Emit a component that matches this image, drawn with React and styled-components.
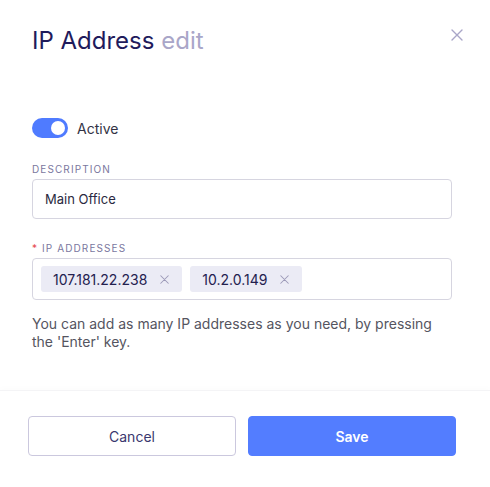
import styled, { createGlobalStyle } from "styled-components";
import { useState } from "react";

const GlobalStyle = createGlobalStyle`
  html, body {
    margin: 0;
    padding: 0;
    background: #ffffff;
  }
  body {
    font-family: Inter, "Noto Sans", sans-serif;
    -webkit-font-smoothing: antialiased;
  }
  * { box-sizing: border-box; }
`;

const CloseIcon = ({ size = 12, color = "#a9a6c8" }) => (
  <svg width={size} height={size} viewBox="0 0 12 12" fill="none">
    <path d="M1 1L11 11M11 1L1 11" stroke={color} strokeWidth="1.4" strokeLinecap="round" />
  </svg>
);

const App = () => {
  const [active, setActive] = useState(true);
  const [tags, setTags] = useState(["107.181.22.238", "10.2.0.149"]);

  return (
    <Modal>
      <GlobalStyle />
      <Header>
        <Title>
          IP Address <Muted>edit</Muted>
        </Title>
        <CloseButton aria-label="close">
          <CloseIcon />
        </CloseButton>
      </Header>

      <Body>
        <ToggleRow>
          <Switch $on={active} onClick={() => setActive(!active)}>
            <Knob $on={active} />
          </Switch>
          <ToggleLabel>Active</ToggleLabel>
        </ToggleRow>

        <Field>
          <Label>DESCRIPTION</Label>
          <TextInput defaultValue="Main Office" />
        </Field>

        <Field $gap={23}>
          <Label>
            <Star>*</Star> IP ADDRESSES
          </Label>
          <TagBox>
            {tags.map((t) => (
              <Tag key={t}>
                <span>{t}</span>
                <TagRemove onClick={() => setTags(tags.filter((x) => x !== t))}>
                  <CloseIcon size={9} color="#9c99b8" />
                </TagRemove>
              </Tag>
            ))}
          </TagBox>
          <Help>
            You can add as many IP addresses as you need, by pressing the 'Enter' key.
          </Help>
        </Field>
      </Body>

      <Footer>
        <Button>Cancel</Button>
        <Button $primary>Save</Button>
      </Footer>
    </Modal>
  );
};

export default App;

const Modal = styled.div`
  width: 490px;
  height: 487px;
  display: flex;
  flex-direction: column;
  background: #fff;
`;

const Header = styled.div`
  display: flex;
  justify-content: space-between;
  align-items: flex-start;
  padding: 25px 27px 0 32px;
`;

const Title = styled.h2`
  margin: 0;
  font-size: 24px;
  font-weight: 400;
  line-height: 32px;
  color: #1f1b5c;
  letter-spacing: 0;
`;

const Muted = styled.span`
  color: #a9a6c8;
`;

const CloseButton = styled.button`
  border: none;
  background: none;
  padding: 0;
  margin-top: 4px;
  width: 12px;
  height: 12px;
  display: flex;
  cursor: pointer;
`;

const Body = styled.div`
  flex: 1;
  padding: 61px 38px 0 32px;
`;

const ToggleRow = styled.div`
  display: flex;
  align-items: center;
  gap: 9px;
`;

const Switch = styled.button`
  width: 36px;
  height: 20px;
  border-radius: 10px;
  border: none;
  padding: 0;
  position: relative;
  background: ${(p) => (p.$on ? "#4f7bff" : "#d4d3df")};
  cursor: pointer;
`;

const Knob = styled.span`
  position: absolute;
  top: 3px;
  left: ${(p) => (p.$on ? "19px" : "3px")};
  width: 14px;
  height: 14px;
  border-radius: 50%;
  background: #fff;
`;

const ToggleLabel = styled.span`
  font-size: 14px;
  color: #333344;
`;

const Field = styled.div`
  margin-top: ${(p) => p.$gap ?? 25}px;
  display: flex;
  flex-direction: column;
`;

const Label = styled.label`
  font-size: 10px;
  letter-spacing: 1.1px;
  color: #7a779e;
  line-height: 12px;
  margin-bottom: 4px;
`;

const Star = styled.span`
  color: #e5484d;
`;

const TextInput = styled.input`
  height: 40px;
  border: 1px solid #d6d5e0;
  border-radius: 4px;
  padding: 0 12px;
  font-family: inherit;
  font-size: 13px;
  color: #2a2940;
  outline: none;
`;

const TagBox = styled.div`
  height: 42px;
  border: 1px solid #d6d5e0;
  border-radius: 4px;
  padding: 0 8px;
  display: flex;
  align-items: center;
  gap: 8px;
`;

const Tag = styled.div`
  height: 26px;
  display: flex;
  align-items: center;
  gap: 13px;
  padding: 0 13px 0 12px;
  background: #ebebf5;
  border-radius: 3px;
  font-size: 14px;
  color: #23204f;
`;

const TagRemove = styled.button`
  border: none;
  background: none;
  padding: 0;
  display: flex;
  cursor: pointer;
`;

const Help = styled.p`
  margin: 15px 0 0;
  font-size: 14px;
  line-height: 18px;
  color: #55555f;
  max-width: 400px;
`;

const Footer = styled.div`
  display: flex;
  gap: 12px;
  padding: 25px 34px 31px 28px;
  border-top: 1px solid #f4f4f6;
  box-shadow: 0 -3px 5px rgba(0, 0, 0, 0.012);
`;

const Button = styled.button`
  flex: 1;
  height: 40px;
  border-radius: 4px;
  font-family: inherit;
  font-size: 14px;
  cursor: pointer;
  border: 1px solid ${(p) => (p.$primary ? "#537dff" : "#cbc8de")};
  background: ${(p) => (p.$primary ? "#537dff" : "#fff")};
  color: ${(p) => (p.$primary ? "#fff" : "#3a376e")};
  font-weight: ${(p) => (p.$primary ? 600 : 400)};
`;
